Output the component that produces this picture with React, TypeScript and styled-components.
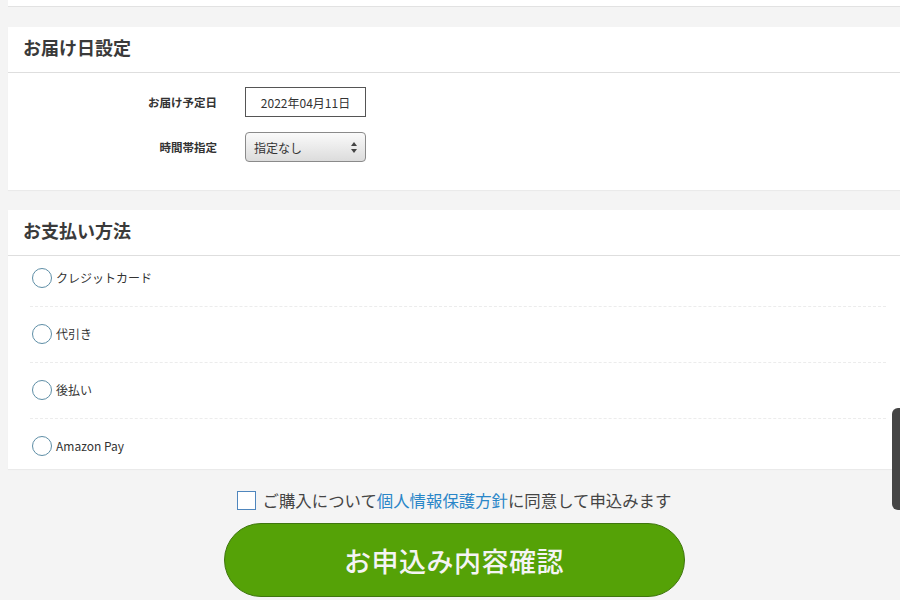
import styled, { createGlobalStyle } from "styled-components";

const GlobalStyle = createGlobalStyle`
  html, body {
    margin: 0;
    padding: 0;
    background: #f4f4f4;
    font-family: "Noto Sans CJK JP", "Noto Sans", sans-serif;
    color: #333;
  }
`;

const Page = styled.div`
  padding-left: 8px;
  display: flex;
  flex-direction: column;
  gap: 20px;
  position: relative;
`;

const TopEdge = styled.div`
  height: 6px;
  background: #fff;
  border-bottom: 1px solid #e2e2e2;
`;

const Card = styled.section`
  background: #fff;
  box-shadow: 0 1px 1px rgba(0, 0, 0, 0.04);
`;

const CardTitle = styled.h2`
  margin: 0;
  height: 46px;
  box-sizing: border-box;
  padding: 0 0 6px 15px;
  display: flex;
  align-items: center;
  font-size: 18px;
  font-weight: 700;
  color: #3a3a3a;
  border-bottom: 1px solid #dedede;
`;

const FormBody = styled.div`
  padding: 14px 0 28px;
  display: flex;
  flex-direction: column;
  gap: 15px;
`;

const FormRow = styled.div`
  display: grid;
  grid-template-columns: 209px 121px;
  column-gap: 28px;
  align-items: center;
`;

const Label = styled.label`
  text-align: right;
  font-size: 11.5px;
  font-weight: 700;
  color: #333;
`;

const DateBox = styled.div`
  height: 30px;
  box-sizing: border-box;
  border: 1px solid #555;
  display: flex;
  align-items: center;
  justify-content: center;
  font-size: 12px;
  color: #333;
`;

const SelectBox = styled.div`
  height: 30px;
  box-sizing: border-box;
  border: 1px solid #8a8a8a;
  border-radius: 4px;
  background: linear-gradient(#fafafa, #dcdcdc);
  display: flex;
  align-items: center;
  justify-content: space-between;
  padding: 0 8px 0 8px;
  font-size: 12px;
  color: #333;
`;

const PayList = styled.div`
  padding: 0 14px 0 22px;
`;

const PayRow = styled.div`
  display: flex;
  align-items: center;
  gap: 4px;
  padding: 15px 2px 16px;
  border-bottom: 1px dashed #ececec;
  font-size: 12px;
  color: #333;
  &:first-child {
    padding-top: 10px;
  }
  &:last-child {
    border-bottom: none;
    padding-bottom: 11px;
  }
`;

const Radio = styled.span`
  width: 18px;
  height: 18px;
  border-radius: 50%;
  border: 1.5px solid #5e8ea6;
  flex-shrink: 0;
`;

const PayText = styled.span`
  line-height: 24px;
`;

const AgreeRow = styled.div`
  display: flex;
  justify-content: center;
  align-items: center;
  gap: 7px;
  font-size: 16.4px;
  color: #444;
  margin-top: -1px;
`;

const CheckBox = styled.span`
  width: 17px;
  height: 17px;
  border: 1.5px solid #4f86bd;
  background: #fff;
`;

const Link = styled.a`
  color: #2a86c8;
  text-decoration: none;
`;

const SubmitButton = styled.button`
  align-self: center;
  margin-top: -9px;
  width: 461px;
  height: 74px;
  border-radius: 37px;
  border: 1px solid #3f760e;
  background: #55a207;
  color: #f4f4f4;
  font-family: "Noto Sans CJK JP", sans-serif;
  font-size: 27px;
  font-weight: 500;
  letter-spacing: 0.5px;
  cursor: pointer;
`;

const SideTab = styled.div`
  position: fixed;
  right: 0;
  top: 408px;
  width: 8px;
  height: 102px;
  background: #454545;
  border-radius: 6px 0 0 6px;
`;

const payments = ["クレジットカード", "代引き", "後払い", "Amazon Pay"];

function UpDownArrows() {
  return (
    <svg width="6" height="11" viewBox="0 0 6 11">
      <path d="M3 0 L6 4 H0 Z" fill="#444" />
      <path d="M3 11 L6 7 H0 Z" fill="#444" />
    </svg>
  );
}

export default function App() {
  return (
    <>
      <GlobalStyle />
      <Page>
        <TopEdge />
        <Card>
          <CardTitle>お届け日設定</CardTitle>
          <FormBody>
            <FormRow>
              <Label>お届け予定日</Label>
              <DateBox>2022年04月11日</DateBox>
            </FormRow>
            <FormRow>
              <Label>時間帯指定</Label>
              <SelectBox>
                指定なし
                <UpDownArrows />
              </SelectBox>
            </FormRow>
          </FormBody>
        </Card>
        <Card>
          <CardTitle>お支払い方法</CardTitle>
          <PayList>
            {payments.map((p) => (
              <PayRow key={p}>
                <Radio />
                <PayText>{p}</PayText>
              </PayRow>
            ))}
          </PayList>
        </Card>
        <AgreeRow>
          <CheckBox />
          <span>
            ご購入について<Link href="#">個人情報保護方針</Link>に同意して申込みます
          </span>
        </AgreeRow>
        <SubmitButton>お申込み内容確認</SubmitButton>
      </Page>
      <SideTab />
    </>
  );
}
